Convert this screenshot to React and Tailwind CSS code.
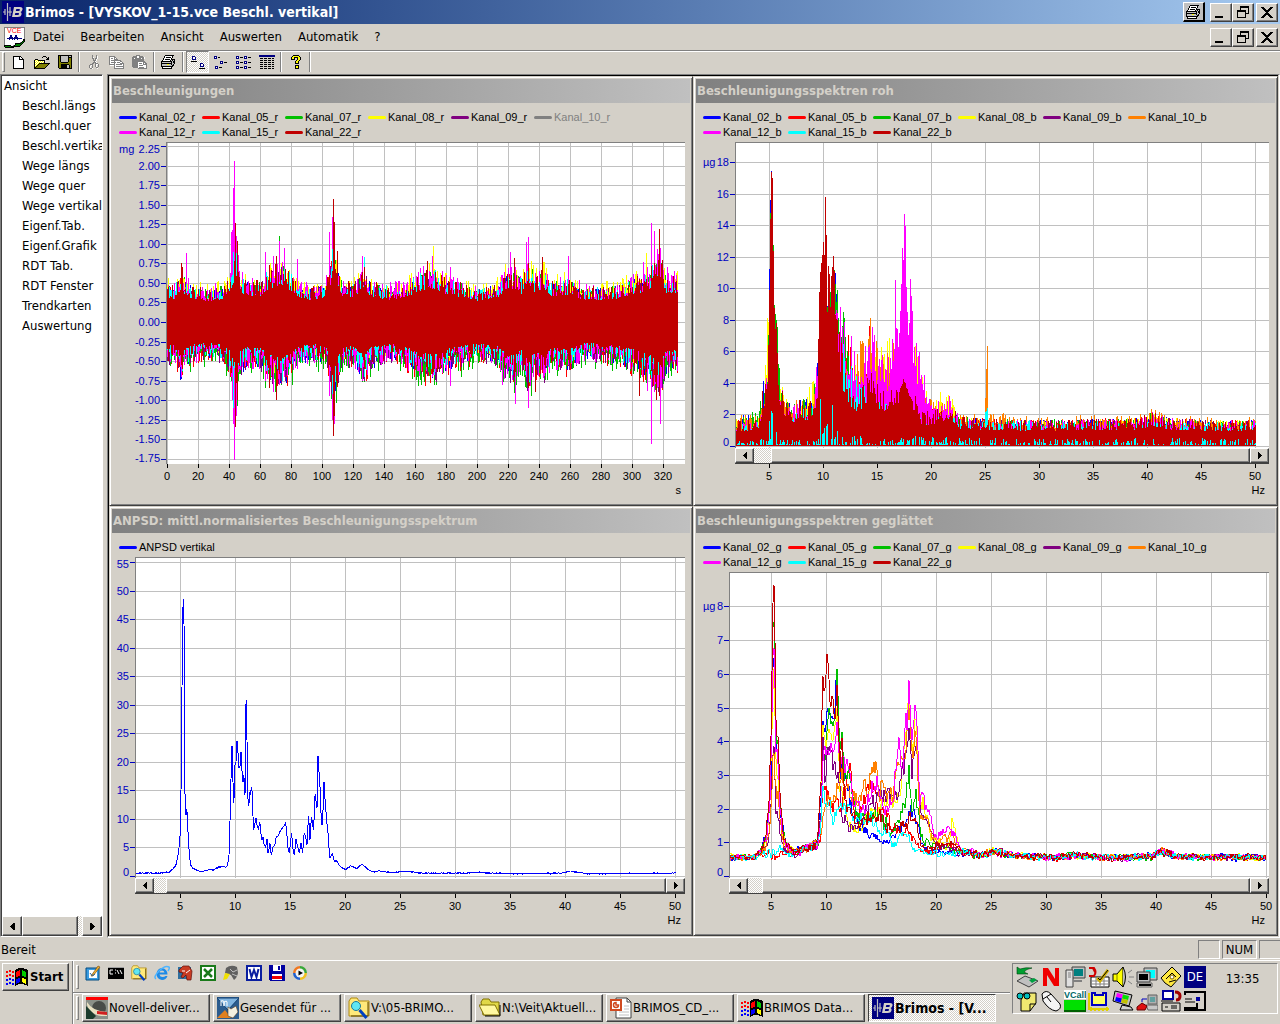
import React from 'react';
import clsx from 'clsx';

const COLORS = {
  '02': '#0000ff',
  '05': '#ff0000',
  '07': '#00c000',
  '08': '#ffff00',
  '09': '#800080',
  10: '#ff8000',
  12: '#ff00ff',
  15: '#00ffff',
  22: '#c00000',
};
const CHANNELS = ['02', '05', '07', '08', '09', '10', '12', '15', '22'];

const raised =
  'bg-[#d4d0c8] border border-t-white border-l-white border-r-[#404040] border-b-[#404040] shadow-[inset_-1px_-1px_0_#808080]';
const hatch =
  'bg-[conic-gradient(#fff_25%,#d4d0c8_0_50%,#fff_0_75%,#d4d0c8_0)] bg-[length:2px_2px]';

/* ---------- signal data ---------- */

const makeRandom = (seed) => {
  let s = seed;
  return () => {
    s = (s * 1664525 + 1013904223) % 4294967296;
    return s / 4294967296;
  };
};

// linear interpolation in a flat list x0, y0, x1, y1, ...
const interp = (pts, x) => {
  if (x <= pts[0]) return pts[1];
  for (let i = 2; i < pts.length; i += 2) {
    if (x <= pts[i]) {
      const t = (x - pts[i - 2]) / (pts[i] - pts[i - 2]);
      return pts[i - 1] + t * (pts[i + 1] - pts[i - 1]);
    }
  }
  return pts[pts.length - 1];
};

const TIME_ENVELOPE = [
  0, 0.4, 5, 0.37, 9, 0.55, 11, 0.46, 16, 0.38, 28, 0.34, 36, 0.38, 40, 0.46, 43, 0.66, 45, 0.75, 47, 0.48,
  52, 0.42, 60, 0.43, 64, 0.52, 70, 0.58, 74, 0.6, 79, 0.52, 84, 0.42, 92, 0.36, 102, 0.4, 105, 0.55,
  107, 0.9, 109, 0.65, 112, 0.43, 120, 0.4, 127, 0.56, 131, 0.42, 145, 0.36, 155, 0.42, 162, 0.5, 172, 0.55,
  180, 0.45, 200, 0.35, 213, 0.4, 219, 0.54, 224, 0.54, 229, 0.45, 233, 0.66, 237, 0.48, 243, 0.56, 248, 0.42,
  258, 0.45, 270, 0.35, 290, 0.38, 300, 0.45, 305, 0.48, 310, 0.52, 314, 0.6, 318, 0.66, 322, 0.48, 330, 0.46,
];

// [second, up, down] of the single strokes that stand out
const TIME_SPIKES = {
  12: [
    [12, 0.88, 0.5], [41, 1.15, 0.7], [41.8, 1.18, 1.0], [42.4, 1.72, 1.3], [43, 2.06, 1.76], [44.4, 1.1, 1.2],
    [63, 0.9, 0.75], [68.5, 0.85, 0.9], [72.3, 1.04, 0.8], [75.5, 0.95, 0.7], [84, 0.81, 0.6], [104.5, 1.15, 0.95],
    [106.3, 1.35, 1.25], [108, 0.9, 1.3], [126, 0.85, 0.75], [171, 0.85, 0.7], [183, 0.7, 0.82],
    [216.5, 0.6, 0.8], [221.5, 0.9, 0.6], [224.5, 0.7, 1.05], [232, 1.02, 0.7], [233.2, 1.09, 1.1],
    [259, 0.85, 0.55], [307, 0.77, 0.6], [310, 0.7, 0.88], [312.5, 1.27, 1.56], [314.5, 1.16, 0.9],
    [316.5, 0.94, 0.85], [318, 0.95, 1.3], [323, 0.7, 0.5], [327.5, 0.65, 0.5],
  ],
  22: [
    [9, 0.75, 0.55], [10, 0.7, 0.6], [44, 1.27, 1.35], [45, 1.04, 1.0], [66, 0.73, 0.85], [70.5, 0.85, 1.0],
    [107, 1.57, 1.46], [108, 1.28, 1.2], [110, 0.91, 0.8], [127, 0.7, 0.6], [168, 0.78, 0.6],
    [224.2, 0.82, 0.7], [233, 0.75, 0.85], [237.5, 0.5, 0.9], [242, 0.83, 0.6], [305, 0.55, 0.95],
    [316, 0.7, 1.0], [317.7, 1.19, 0.95], [319.5, 0.8, 0.7],
  ],
  '08': [[33, 0.53, 0.4], [172, 0.98, 0.6], [309.5, 0.88, 0.5], [194, 0.53, 0.4]],
  15: [[42.5, 0.9, 1.1], [127, 0.83, 0.7]],
  '07': [[72.2, 1.1, 0.8], [190, 0.5, 0.7], [243.5, 0.6, 0.75]],
};

const TIME_GAIN = {
  '02': [0.95, 1.12], '05': [0.9, 1.22], '07': [0.98, 1.32], '08': [1.12, 0.9],
  '09': [0.95, 1.14], 12: [1.1, 1.14], 15: [0.98, 1.0], 22: [1.0, 0.98],
};

const timePath = (ch) => {
  const rand = makeRandom(Number(ch) * 7919 + 11);
  const [gu, gd] = TIME_GAIN[ch];
  const up = [];
  const down = [];
  for (let px = 0; px < 511; px += 1) {
    const e = interp(TIME_ENVELOPE, px / 1.549);
    up.push(e * gu * (0.78 + 0.5 * rand() ** 2.4));
    down.push(e * gd * (0.78 + 0.5 * rand() ** 2.4));
  }
  (TIME_SPIKES[ch] || []).forEach(([s, u, d]) => {
    const i = Math.round(s * 1.549);
    up[i] = u;
    down[i] = d;
  });
  return up
    .map((u, i) => `M${i + 1.5} ${(180 - u * 78.1).toFixed(1)}V${(180 + down[i] * 78.1).toFixed(1)}`)
    .join('');
};

const RAW_TAIL = [22.5, 1.5, 25, 1.35, 30, 1.3, 39, 1.4, 40.5, 1.7, 42, 1.4, 46, 1.3, 50, 1.3];
const RAW = {
  22: [
    1, 1.25, 3, 1.3, 4, 1.6, 4.3, 2.7, 4.7, 4, 4.9, 6.6, 5.02, 12, 5.12, 16.8, 5.18, 17.8, 5.24, 17.6, 5.3, 14.5, 5.4, 9.6, 5.5, 7.3,
    5.65, 7.9, 5.75, 4.8, 6, 3.2, 6.5, 2.4, 7, 1.8, 7.7, 2.3, 8.5, 2.2, 9, 2.7, 9.4, 3.5, 9.6, 9.6, 9.75, 11.8,
    9.85, 11.3, 9.95, 13.5, 10.05, 11.4, 10.14, 15.7, 10.22, 15.6, 10.32, 7.8, 10.48, 12.9, 10.6, 8.2, 10.75, 11.4, 10.85, 11.2,
    10.95, 13, 11.05, 8.2, 11.3, 8, 11.5, 5.6, 11.8, 4.8, 12.2, 4, 12.6, 2.8, 13.4, 2.8, 14, 3.6, 14.2, 5, 14.5, 4,
    15, 3.2, 16, 2.9, 17, 3.4, 17.4, 4.2, 18, 3.1, 18.6, 2.4, 19.2, 1.6, 20.5, 2, 21, 2, 21.7, 2.4, ...RAW_TAIL,
  ],
  12: [
    1, 1.2, 4, 1.4, 4.6, 2.4, 5.2, 9, 5.5, 5, 6.5, 2, 9, 2.2, 9.6, 6, 11.2, 8.5, 11.4, 7.9, 11.8, 7, 12.2, 5.4, 12.5, 5.8, 13, 4.6,
    13.5, 4.9, 14.2, 6.4, 14.6, 6.3, 15, 4.9, 15.5, 5.8, 16, 4.4, 16.5, 6.8, 16.8, 10, 17, 7, 17.15, 9.3, 17.3, 12.6,
    17.4, 11.5, 17.47, 14.8, 17.55, 14.6, 17.65, 10.2, 17.8, 7.5, 17.9, 6.5, 18.02, 10.6, 18.2, 8.6, 18.4, 5.7, 18.8, 5.2, 19, 5.6,
    19.4, 3.6, 20, 3, 20.6, 2.4, 21.5, 2.7, 22.2, 2, ...RAW_TAIL,
  ],
  10: [
    1, 1.5, 4, 1.6, 4.6, 2.4, 5.2, 8, 6, 2.4, 9, 2.4, 10, 5, 12, 4.6, 12.6, 3.8, 13.1, 5, 13.8, 5.4, 14.2, 6.8, 14.6, 5.2, 15.1, 5.4,
    15.5, 4.2, 16.4, 5.2, 17, 6, 18, 6, 19, 3.8, 20, 2.4, 22, 1.9, 23, 1.7, 24.9, 1.6, 25.04, 5.9, 25.13, 6.7, 25.25, 1.8, 30, 1.5,
    39, 1.6, 40.5, 1.9, 42, 1.5, 50, 1.45,
  ],
  '07': [
    1, 1.3, 4, 1.8, 4.4, 3, 4.75, 4.8, 4.95, 8.2, 5.1, 16.8, 5.3, 15.5, 5.4, 9, 5.7, 7.6, 6, 3.3, 7, 2, 7.8, 2.7, 9, 2.5,
    9.6, 7, 10.4, 9, 11, 11.1, 11.2, 8.9, 11.38, 11.2, 11.5, 7, 11.85, 8, 12.1, 5, 13, 3.4, 17, 4, 19, 2, ...RAW_TAIL,
  ],
  '02': [1, 1.4, 4, 1.7, 4.85, 5, 5.1, 17.3, 5.2, 17.3, 5.3, 9, 6, 3, 7, 2, 9, 2.6, 9.4, 4.4, 10, 8, 11.1, 10.8, 11.4, 6, 12, 4, 13, 3, 19, 2, ...RAW_TAIL],
  '05': [1, 1.3, 9, 1.6, 10, 4, 12, 5.2, 12.2, 5.8, 13, 3.6, 14.2, 6.8, 14.5, 5, 16, 3.4, 18, 3, 19, 2, ...RAW_TAIL],
  '08': [1, 1.3, 4, 1.6, 4.5, 3, 5.2, 12, 5.6, 5, 7, 1.7, 9.4, 3.6, 10, 7, 11, 8, 12, 4, 14, 4, 16.4, 5.8, 18, 6, 20, 2.4, 21.4, 3.1, 22, 2.2, ...RAW_TAIL],
  '09': [1, 1.2, 4, 1.4, 4.6, 2, 5.2, 7, 6, 2, 9, 2, 10, 7, 12, 3.5, 15, 3.4, 17.5, 6, 19, 2.4, 20, 1.9, ...RAW_TAIL],
  15: [1, 1.1, 5.2, 1.6, 9, 2, 10, 3.4, 11.6, 4, 11.8, 5.4, 12, 3.8, 12.6, 4, 13.6, 3.1, 14, 2.8, 16, 2.2, 19, 1.6, 22, 1.4, 24.9, 1.3, 25.1, 3, 25.3, 1.3, 50, 1.15],
};

const rawPath = (ch) => {
  const rand = makeRandom(Number(ch) * 104729 + 3);
  let d = '';
  for (let px = 1; px < 521; px += 1) {
    const f = (px + 19.7) / 10.8;
    const peak = (f > 4.8 && f < 5.8) || (f > 9.5 && f < 11.3) || (f > 17 && f < 18.3);
    const v = interp(RAW[ch], f) * (peak ? 0.99 + rand() * 0.03 : 0.74 + rand() ** 1.8 * 0.55);
    d += `M${px + 0.5} ${(304 - v * 15.78).toFixed(1)}V304`;
  }
  return d;
};

// low strokes of the quietest sensor, seen along the foot of the plot
const footPath = () => {
  const rand = makeRandom(4242);
  const foot = [1, 0.3, 4.8, 0.4, 5.1, 2.6, 5.6, 1.6, 6, 0.4, 9.5, 0.4, 9.7, 3.2, 9.9, 1.2, 10.3, 1.8, 10.6, 1.3, 10.8, 2.8, 11.2, 1, 12, 0.6, 17.5, 0.6, 25, 0.45, 50, 0.45];
  let d = '';
  for (let px = 1; px < 521; px += 1) {
    const v = interp(foot, (px + 19.7) / 10.8) * rand() ** 1.5;
    if (rand() > 0.4) d += `M${px + 0.5} ${(303 - v * 15.78).toFixed(1)}V303`;
  }
  return d;
};

const ANPSD = [
  0.9, 0.5, 3, 0.5, 4, 0.7, 4.4, 1.4, 4.6, 2, 4.8, 4, 4.9, 5.5, 5, 8, 5.08, 20, 5.15, 36, 5.2, 46, 5.27, 48.8, 5.36, 40,
  5.4, 15, 5.48, 9.8, 5.53, 12, 5.6, 11, 5.7, 7, 5.8, 4, 5.9, 2, 6.1, 1.4, 6.5, 1, 7, 0.7, 7.5, 1.1, 8, 1.1, 8.5, 1.6,
  9.2, 1.6, 9.4, 3, 9.55, 13, 9.65, 22.5, 9.72, 23, 9.8, 13, 9.85, 12.5, 9.95, 19.5, 10.05, 20, 10.12, 24, 10.2, 22.5,
  10.3, 19, 10.4, 19, 10.5, 21.7, 10.6, 18, 10.7, 16, 10.75, 19, 10.8, 15, 10.88, 14, 10.95, 30, 11, 30.8, 11.05, 23,
  11.12, 14, 11.2, 11.7, 11.3, 15, 11.35, 14, 11.45, 15.7, 11.55, 14, 11.62, 8, 11.75, 9, 11.85, 10.3, 11.95, 9, 12.1, 8,
  12.2, 9.8, 12.3, 7.5, 12.4, 6.3, 12.5, 6.8, 12.6, 5.5, 12.75, 5, 12.85, 7, 12.95, 4, 13.15, 5.8, 13.25, 3.5, 13.4, 5,
  13.6, 5.5, 13.7, 6.8, 13.9, 7, 14.1, 8, 14.3, 8.5, 14.55, 9.2, 14.65, 8, 14.75, 5, 14.9, 4, 15.1, 7.7, 15.2, 5,
  15.35, 3.6, 15.5, 6.4, 15.8, 4, 15.95, 5.8, 16.1, 4, 16.25, 7.8, 16.35, 7, 16.5, 5.5, 16.65, 11, 16.75, 5.7, 16.9, 10.4,
  17.1, 8, 17.25, 15, 17.4, 11, 17.5, 21, 17.6, 18, 17.7, 15, 17.8, 9.5, 17.9, 8.6, 18.05, 16.7, 18.15, 13, 18.3, 9.5,
  18.45, 7, 18.55, 3, 18.8, 4, 19, 2.5, 19.2, 2.7, 19.5, 1.7, 20, 1.1, 20.5, 1.8, 21, 1.3, 21.5, 2.1, 22, 1.2, 22.5, 0.7,
  23, 0.9, 24, 0.6, 25.5, 0.8, 27, 0.5, 31, 0.5, 32.3, 0.7, 33, 0.5, 36, 0.4, 39.5, 0.5, 40.5, 0.8, 42, 0.4, 50, 0.5,
];

const anpsdPath = () => {
  const rand = makeRandom(99);
  let d = '';
  for (let px = 1; px < 541; px += 0.5) {
    const v = interp(ANPSD, (px - 45.5) / 11 + 5);
    d += `${px > 1 ? 'L' : 'M'}${px} ${(319 - v * 5.71 + (rand() - 0.5) * 0.8).toFixed(1)}`;
  }
  return d;
};

const rise = (peak, shoulder) => [
  1, 0.55, 3.4, 0.55, 4, 0.6 + peak * 0.02, 4.5, 0.6 + peak * 0.07, 4.8, 0.6 + peak * 0.2, 5, peak * 0.55, 5.1, peak * 0.9,
  5.18, peak, 5.26, peak, 5.34, peak * 0.75, 5.42, shoulder, 5.58, shoulder, 5.8, 0.6 + shoulder * 0.35, 6.2, 0.6 + shoulder * 0.12, 7, 0.68,
  8.4, 0.85, 9.2, 0.95,
];
const SMOOTH_TAIL = [22.2, 0.72, 24, 0.62, 25.3, 0.72, 27, 0.6, 31, 0.55, 32.3, 0.62, 36, 0.54, 39.5, 0.58, 40.5, 0.75, 42, 0.58, 50, 0.54];
const SMOOTH = {
  '02': [...rise(6.8, 3.7), 9.5, 2.2, 9.65, 4.5, 9.85, 4, 10.1, 4.9, 10.4, 4.9, 10.7, 4.5, 10.95, 6.2, 11.2, 3.6, 11.8, 2.7, 12.3, 2, 13, 1.5, 14, 1.3, 15, 1, 16, 1.1, 17, 1.5, 17.6, 1.9, 18.3, 1.6, 18.6, 0.9, 20, 0.7, ...SMOOTH_TAIL],
  '05': [...rise(0.65, 0.6), 9.4, 1, 9.7, 2.6, 10.4, 2.3, 11, 2, 11.7, 2.4, 12.2, 3, 12.6, 1.9, 13.4, 2.2, 14.2, 2.9, 14.8, 1.7, 15.2, 2.2, 16, 1.4, 17, 1.5, 18, 1.1, 18.6, 0.7, 20, 0.75, 21.5, 0.9, ...SMOOTH_TAIL],
  '07': [...rise(7.6, 4.1), 9.5, 2, 9.65, 4, 9.85, 3, 10.2, 5, 10.5, 4.6, 10.8, 4.6, 10.95, 6.1, 11.2, 3.8, 11.42, 4.3, 11.6, 3, 11.9, 3.2, 12.5, 2.1, 13, 1.6, 14, 1.9, 15, 1.7, 16, 1.3, 17, 1.9, 17.5, 2.9, 17.8, 1.8, 18.1, 2.5, 18.6, 1.2, 19.5, 0.9, ...SMOOTH_TAIL],
  '08': [...rise(6, 3), 9.5, 2, 9.7, 4.8, 9.9, 3.7, 10.2, 4.7, 10.6, 4, 10.95, 5.1, 11.2, 3, 11.5, 2.5, 12, 1.6, 13, 1.3, 14, 1.9, 15, 2, 15.5, 2.5, 16.5, 2.3, 17.2, 4, 17.5, 5.4, 17.85, 3.5, 18.1, 4.9, 18.5, 2.6, 19.5, 1.2, 21, 0.9, 21.5, 1.8, 22, 1, ...SMOOTH_TAIL],
  '09': [...rise(3.8, 1.8), 9.5, 2, 9.7, 4.3, 9.85, 3, 10.1, 3.8, 10.5, 3.2, 11, 3.3, 11.5, 1.8, 12, 1.5, 13, 1.6, 14, 2, 15, 2.5, 16, 2.2, 17, 3, 17.5, 4.4, 17.8, 3, 18.1, 4, 18.5, 2.1, 19.2, 1.4, 20, 0.9, ...SMOOTH_TAIL],
  10: [...rise(3.8, 2.4), 9.6, 1.4, 10.1, 2.6, 10.6, 2.2, 11, 2.9, 11.5, 3, 12, 2.4, 13, 2.2, 14, 2.9, 14.5, 3.3, 14.8, 2, 15, 2.9, 15.5, 2.4, 16, 2.3, 16.7, 3.5, 17.2, 3.6, 17.5, 4.9, 17.85, 3.5, 18.1, 4.6, 18.5, 2, 19.3, 1.5, 20, 1, 21.5, 1.2, ...SMOOTH_TAIL],
  12: [...rise(6.7, 3.3), 9.5, 1.6, 9.7, 3.4, 10.1, 3.6, 10.6, 3.4, 10.95, 4.6, 11.2, 3.1, 11.4, 3.6, 12, 2.9, 12.5, 2.2, 13.5, 2, 14.2, 2.7, 14.6, 3.1, 14.9, 2, 16, 2.2, 16.6, 4.2, 16.8, 3, 17, 3.5, 17.2, 5, 17.35, 4.3, 17.5, 6, 17.8, 3.8, 18.05, 5.3, 18.3, 3.9, 18.5, 2.3, 18.8, 2.2, 19.3, 1.8, 20, 1.2, 21.5, 1.4, ...SMOOTH_TAIL],
  15: [...rise(0.85, 0.7), 9.5, 1.5, 9.7, 2.9, 9.9, 2.1, 10.2, 2.4, 10.6, 1.6, 11, 2.1, 12, 2, 13, 1.6, 14, 1.7, 14.5, 1.6, 15, 1.1, 15.5, 1.4, 16, 0.9, 17, 1.3, 17.5, 1.1, 17.9, 0.7, 20, 0.65, ...SMOOTH_TAIL],
  22: [...rise(8.4, 4.1), 9.5, 2.6, 9.65, 6.2, 9.8, 5.2, 9.95, 6, 10.1, 6.7, 10.2, 5.9, 10.35, 4.8, 10.5, 5.2, 10.75, 4.7, 10.95, 5.8, 11.2, 3.2, 11.4, 4.1, 11.7, 2, 13, 1.5, 14.5, 2, 16, 1.3, 17.5, 1.7, 18.2, 1.5, 18.7, 0.8, 21.5, 1, ...SMOOTH_TAIL],
};

const smoothPath = (ch) => {
  const rand = makeRandom(Number(ch) * 5381 + 77);
  let d = '';
  let n = 0;
  for (let px = 1; px < 538; px += 1) {
    const f = (px - 42.5) / 11 + 5;
    n = n * 0.4 + (rand() - 0.5);
    const e = interp(SMOOTH[ch], f);
    const v = e * (1 + n * (e > 3.5 ? 0.08 : 0.24)) + (rand() - 0.5) * 0.1;
    d += `${px > 1 ? 'L' : 'M'}${px} ${(304 - v * 33.7).toFixed(1)}`;
  }
  return d;
};

/* ---------- chart parts ---------- */

const range = (from, to, step) => {
  const out = [];
  for (let v = from; v <= to + 1e-6; v += step) out.push(v);
  return out;
};

const Scrollbar = ({ gap }) => (
  <div className="flex h-[16px] border-b border-[#404040]">
    <button type="button" aria-label="Zurück" className={clsx(raised, 'w-[19px] flex items-center justify-center')}>
      <Arrow left />
    </button>
    <div className={clsx(hatch, gap)} />
    <div className={clsx(raised, 'flex-1')} />
    <button type="button" aria-label="Weiter" className={clsx(raised, 'w-[19px] flex items-center justify-center')}>
      <Arrow />
    </button>
  </div>
);

const Arrow = ({ left, big }) => (
  <svg viewBox="0 0 4 7" className={big ? 'w-[5px] h-[9px]' : 'w-[4px] h-[7px]'} shapeRendering="crispEdges">
    <path d={left ? 'M4 0V7L0 3.5Z' : 'M0 0V7L4 3.5Z'} />
  </svg>
);

const Panel = ({ title, legend, legendCols, axisWidth, right, w, h, xTicks, xPos, yTicks, yPos, yFormat, yUnit, xUnit, gap, children }) => {
  const firstY = Math.max(7, yPos(yTicks[yTicks.length - 1]));
  return (
    <section className="min-w-0 flex flex-col p-px border border-t-[#d4d0c8] border-l-[#d4d0c8] border-r-[#404040] border-b-[#404040] shadow-[inset_1px_1px_0_#fff,inset_-1px_-1px_0_#808080]">
      <div className="flex-1 min-h-0 flex flex-col p-px">
        <h2 className="h-6 leading-6 px-px bg-linear-to-r from-[#808080] to-[#c0c0c0] text-[#d4d0c8] font-bold text-[13px] whitespace-nowrap overflow-hidden">
          {title}
        </h2>
        <ul className={clsx("grid pt-[7px] pb-[2px] pl-[7px] font-['Liberation_Sans',sans-serif] text-[11px] leading-[15px]", legendCols)}>
          {legend.map(([label, color, off]) => (
            <li key={label} className={clsx('flex items-center gap-[2px] whitespace-nowrap', off && 'text-[#808080]')}>
              <svg className="w-[18px] h-[3px]" viewBox="0 0 18 3">
                <path d="M1.5 1.5H16.5" stroke={color} strokeWidth="3" strokeLinecap="round" />
              </svg>
              {label}
            </li>
          ))}
        </ul>
        <div className={clsx('flex-1 min-h-0 flex', right)}>
          <svg className={clsx("shrink-0 overflow-visible font-['Liberation_Sans',sans-serif] text-[11px]", axisWidth)} height={h} fill="#0000c0">
            {yTicks.map((v) => {
              const y = yPos(v);
              const ty = Math.min(h - 6, Math.max(7, y));
              return (
                <React.Fragment key={v}>
                  <text x="100%" y={ty} dx="-6" dy="4" textAnchor="end">{yFormat ? yFormat(v) : v}</text>
                  <svg x="100%" className="overflow-visible">
                    <path d={`M-5 ${Math.round(y) + 0.5}H0`} stroke="#0000c0" shapeRendering="crispEdges" />
                  </svg>
                </React.Fragment>
              );
            })}
            {yUnit && <text x="7" y={firstY + 4}>{yUnit}</text>}
          </svg>
          <div className="flex-1 min-w-0 flex flex-col">
            <svg viewBox={`0 0 ${w} ${h}`} preserveAspectRatio="none" className="flex-1 min-h-0 w-full bg-white" shapeRendering="crispEdges">
              <path
                d={yTicks.map((v) => `M0 ${Math.round(yPos(v)) + 0.5}H${w}`).join('') + xTicks.map((v) => `M${Math.round(xPos(v)) + 0.5} 0V${h}`).join('')}
                stroke="#c0c0c0"
              />
              {children}
              <path d={`M0.5 ${h}V0.5H${w}`} fill="none" stroke="#808080" />
            </svg>
            {gap && <Scrollbar gap={gap} />}
            <svg className="w-full h-[39px] overflow-visible shrink-0 font-['Liberation_Sans',sans-serif] text-[11px]">
              {xTicks.map((v) => (
                <svg key={v} x={`${(Math.round(xPos(v)) / w) * 100}%`} className="overflow-visible">
                  <path d="M0.5 0V4" stroke="#000" shapeRendering="crispEdges" />
                  <text x="0" y="16" textAnchor="middle">{v}</text>
                </svg>
              ))}
              <text x="100%" dx="-4" y="30" textAnchor="end">{xUnit}</text>
            </svg>
          </div>
        </div>
      </div>
    </section>
  );
};

const legendFor = (suffix, offChannel) =>
  CHANNELS.map((c) => [`Kanal_${c}_${suffix}`, c === offChannel ? '#808080' : COLORS[c], c === offChannel]);

const Strokes = ({ order, path }) =>
  order.map((c) => <path key={c} d={path(c)} stroke={COLORS[c]} fill="none" />);

/* ---------- icons ---------- */

const PALETTE = {
  k: '#000000', w: '#ffffff', y: '#ffff00', o: '#808000', g: '#808080', s: '#c0c0c0', b: '#000080',
};

const Pixels = ({ rows }) => {
  const w = Math.max(...rows.map((r) => r.length));
  return (
    <svg width={w} height={rows.length} viewBox={`0 0 ${w} ${rows.length}`} shapeRendering="crispEdges">
      {rows.map((row, y) =>
        [...row].map((ch, x) =>
          PALETTE[ch] ? <rect key={`${x}-${y}`} x={x} y={y} width="1" height="1" fill={PALETTE[ch]} /> : null
        )
      )}
    </svg>
  );
};

const ICONS = {
  new: [
    'kkkkkkkk...', 'kwwwwwkwk..', 'kwwwwwkwwk.', 'kwwwwwkkkkk', 'kwwwwwwwwwk', 'kwwwwwwwwwk', 'kwwwwwwwwwk',
    'kwwwwwwwwwk', 'kwwwwwwwwwk', 'kwwwwwwwwwk', 'kwwwwwwwwwk', 'kwwwwwwwwwk', 'kkkkkkkkkkk',
  ],
  open: [
    '.........kkk....', '........k...k.k.', '.............kk.', '.kkk........kkk.', 'kywykkkkkkk.....', 'kwywywywywk.....',
    'kywywywywyk.....', 'kwywykkkkkkkkkkk', 'kywykoooooooook.', 'kwykoooooooook..', 'kykoooooooook...', 'kkoooooooook....', 'kkkkkkkkkkk.....',
  ],
  save: [
    'kkkkkkkkkkkkkk', 'kokssssssskssk', 'kokssssssskkkk', 'kokssssssskook', 'kokssssssskook', 'kokssssssskook', 'kokssssssskook',
    'kookkkkkkkoook', 'kooooooooooook', 'kookkkkkkkkook', 'kookkkkkksskok', 'kookkkkkksskok', 'kookkkkkksskok', '.kkkkkkkkkkkkk',
  ],
  cut: [
    '...g...g..', '...g...gw.', '...gw..gw.', '...gg.ggw.', '....g.gw..', '....gggw..', '.....gw...', '....gggw..', '...gg.ggg.',
    '.ggg..gwwg', 'g.wg..gw.g', 'gw.g..gw.g', 'gw.g...gg.', '.ggw....w.',
  ],
  copy: [
    'gggggg.........', 'gwwwwgg........', 'gwggwgwg.......', 'gwwwwgggg......', 'gwgggggggggg...', 'gwwwwgwwwwwgg..',
    'gwgggggwgggwwg.', 'gwwwwgwwwwwgggg', 'ggggggwggggggwg', '.wwwwgwwwwwwwwg', '.....gwgggggggg', '.....gwwwwwwwwg', '.....gggggggggg',
  ],
  paste: [
    '....gggg.......', '.ggggwwgggg....', 'gggggwwgggggw..', 'ggwggggggwggw..', 'gggggggggggg...', 'gggggggggggg...',
    'ggggggggggggg..', 'ggggggwwwwwggg.', 'ggggggwgggwgwgg', 'ggggggwwwwwgggg', 'ggggggwggggwwwg', 'ggggggwwwwwwwwg', '.gggggwgggggwwg', '......ggggggggg',
  ],
  print: [
    '....kkkkkkkkk..', '...kwwwwwwwk...', '...kwkkkkkwk...', '..kwwwwwwwk....', '..kwkkkkkwkkkk.', '.kwwwwwwwk.ksk.',
    'kkkkkkkkkkkskk.', 'kssssssssskskk', 'kkkkkkkkkkkssk.', 'ksssssyyssksk..', 'ksssssssssskk..', 'kkkkkkkkkkkk...', '.kwwwwwwwwk....', '.kkkkkkkkkk....',
  ],
  large: [
    '.bbb..........', '.bwwb.........', '.bwwb.........', '.bbbb.........', '..............', 'kkkkkk........', '..............',
    '.........bbb..', '.........bwwb.', '.........bwwb.', '.........bbbb.', '..............', '........kkkkkk',
  ],
  small: [
    'bbb...........', 'bwb.kk........', 'bbb...........', '..............', '..............', '......bbb.....', '......bwb.kkk.',
    '......bbb.....', '..............', '..............', '.bbb..........', '.bwb.kkk......', '.bbb..........',
  ],
  list: [
    'bbb.....bbb....', 'bwb.kkk.bwb.kkk', 'bbb.....bbb....', '...............', '...............', 'bbb.....bbb....', 'bwb.kkk.bwb.kkk',
    'bbb.....bbb....', '...............', '...............', 'bbb.....bbb....', 'bwb.kkk.bwb.kkk', 'bbb.....bbb....',
  ],
  details: [
    'bbbbbbbbbbbbbbbb', 'bbbbbbbbbbbbbbbb', '................', '.kkk.kkk.kkk.kk.', '................', '.kkk.kkk.kkk.kk.', '................',
    '.kkk.kkk.kkk.kk.', '................', '.kkk.kkk.kkk.kk.', '................', '.kkk.kkk.kkk.kk.', '................', '.kkk.kkk.kkk.kk.',
  ],
  help: [
    '..kkkkkk..', '.kyyyyyyk.', 'kyykkkkyyk', 'kyyk..kyyk', 'kkkk..kyyk', '.....kyyk.', '....kyyk..', '....kyyk..', '....kkkk..',
    '..........', '....kkkk..', '....kyyk..', '....kyyk..', '....kkkk..',
  ],
};

const Flag = () => (
  <svg width="22" height="18" viewBox="0 0 22 18" shapeRendering="crispEdges">
    <path d="M0 3h2v2H0zM3 2h2v2H3zM6 3h2v2H6zM0 7h2v2H0zM3 6h2v2H3zM6 7h2v2H6z" fill="#f00" />
    <path d="M0 11h2v2H0zM3 10h2v2H3zM6 11h2v2H6zM0 15h2v2H0zM3 14h2v2H3zM6 15h2v2H6z" fill="#00f" />
    <path d="M9 2l4-2h4l5 2v16l-5-2h-4l-4 2z" fill="#000" />
    <path d="M10 4l4-2v6l-4 1z" fill="#f00" />
    <path d="M16 2l4 2v5l-4-1z" fill="#0c0" />
    <path d="M10 11l4-1v4l-4 2z" fill="#00f" />
    <path d="M16 10l4 1v5l-4-2z" fill="#ff0" />
  </svg>
);

const BrimosIcon = () => (
  <svg width="22" height="22" viewBox="0 0 22 22" className="shrink-0">
    <path d="M0 0h22v22H0z" fill="#000080" />
    <path d="M1 11h2V8M3 8v6M5.500 2v18M8 6v9M5.500 11H10" fill="none" stroke="#c0c0c0" strokeWidth="1.200" />
    <path d="M12 6h6q3 0 2.500 2.500-.5 2-2 2.500 1.500.5 1 2.500-.5 2.500-4 2.500h-5.500zM14.300 8l-.5 2h2.700q1.200 0 1.400-1t-.9-1zM13.300 12l-.5 2h2.700q1.400 0 1.600-1t-1-1z" fill="#d4d0c8" fillRule="evenodd" />
  </svg>
);

const VceIcon = () => (
  <svg width="22" height="22" viewBox="0 0 22 22" shapeRendering="crispEdges">
    <path d="M1 1h20v12q-1 5-7 4-2 5-13 3z" fill="#fff" stroke="#808080" />
    <path d="M21 13q-2 6-8 4l-2 4 6-1 4-4z" fill="#008000" stroke="#000" />
    <path d="M1 20q4-1 7 0l3 1H2z" fill="#008000" stroke="#000" />
    <text x="4" y="7" fontSize="7" fill="#f00" fontFamily="Liberation Sans">VCE</text>
    <path d="M4 12h15M6 14l2-5 2 5M11 14l2-5 2 5" fill="none" stroke="#000080" />
  </svg>
);

const Magnifier = ({ small }) => (
  <svg width={small ? 16 : 22} height={small ? 16 : 22} viewBox="0 0 22 22">
    <path d="M1 4l2-3h6l2 3h10v15H1z" fill="#ffe97a" stroke="#b08a10" />
    <path d="M20 5v14H3" fill="none" stroke="#5c4600" />
    <circle cx="8" cy="9" r="4.500" fill="#5fe6f2" stroke="#1a7a9a" />
    <path d="M11.500 13l7 8" stroke="#0040c0" strokeWidth="3" />
  </svg>
);

const QUICK = [
  ['Desktop', <svg key="i" viewBox="0 0 16 16"><path d="M1 3h13v12H1z" fill="#3a9be0" stroke="#004a80" /><path d="M4 5h8v8H4z" fill="#fff" /><path d="M6 11l7-10 2 1-7 9z" fill="#f0b030" stroke="#704000" strokeWidth=".6" /><path d="M5 8q2 4 5 1" stroke="#2060a0" fill="none" /></svg>],
  ['Eingabeaufforderung', <svg key="i" viewBox="0 0 16 16"><path d="M0 2h16v12H0z" fill="#000" /><path d="M0 2h16v1H0z" fill="#a0a0a0" /><path d="M5 5H2v4h3M7 5h1M7 8h1M9 5l2 4M12 5l2 4" fill="none" stroke="#fff" /></svg>],
  ['Suchen', <Magnifier key="i" small />],
  ['Internet Explorer', <svg key="i" viewBox="0 0 16 16"><path d="M13.500 9.500H5.500Q6 12 8.500 12q2 0 3-1h2Q12 15 8 15q-5.500-1-5.500-6Q3 3.500 8 3q5.500 1 5.500 6.500M5.500 7.500h5Q10 5.500 8 5.500t-2.500 2" fill="#1e8ae6" fillRule="evenodd" /><path d="M2 14Q-1 12 5 6t10-4q1 1-1 4" fill="none" stroke="#4db4ff" strokeWidth="1.500" /></svg>],
  ['Browser', <svg key="i" viewBox="0 0 16 16"><path d="M1 2h13v12H1z" fill="#2f6f9f" /><path d="M2 5l4-4 6 0 3 5-1 9h-4l-1-5-3 3-2-1 2-4-4-1z" fill="#c83c24" stroke="#60100a" strokeWidth=".7" /><path d="M5 6h3M9 8l4-3" stroke="#fff" /></svg>],
  ['Excel', <svg key="i" viewBox="0 0 16 16"><path d="M1 1h14v14H1z" fill="#fff" stroke="#1a7a1a" strokeWidth="2" /><path d="M4 4l8 8M12 4l-8 8" stroke="#1a7a1a" strokeWidth="2.500" /></svg>],
  ['Adler', <svg key="i" viewBox="0 0 16 16"><path d="M3 3q5-4 11-1l1 6q-1 5-4 7L8 10 2 8z" fill="#606060" /><path d="M7 4l3 3 4-2M9 9l5 2" stroke="#c0c0c0" fill="none" /><path d="M0 15l2-7 5 1-3 5z" fill="#f0e000" /></svg>],
  ['Word', <svg key="i" viewBox="0 0 16 16"><path d="M1 1h14v14H1z" fill="#fff" stroke="#0a1ea0" strokeWidth="2" /><path d="M3.500 4l2 8 2.500-7 2.500 7 2-8" fill="none" stroke="#0a1ea0" strokeWidth="2" /></svg>],
  ['Diskette', <svg key="i" viewBox="0 0 16 16" shapeRendering="crispEdges"><path d="M0 0h16v16H1l-1-1z" fill="#0000a0" /><path d="M4 0h8v6H4z" fill="#fff" /><path d="M9 1h2v4H9z" fill="#0000a0" /><path d="M3 9h10v6H3z" fill="#fff" /><path d="M3 11h10v3H3z" fill="#f00000" /></svg>],
  ['Media Player', <svg key="i" viewBox="0 0 16 16"><path d="M8 1A7 7 0 0 0 1 8H8z" fill="#f07820" /><path d="M8 1A7 7 0 0 1 15 8H8z" fill="#38a838" /><path d="M1 8A7 7 0 0 0 8 15V8z" fill="#2060d0" /><path d="M15 8A7 7 0 0 1 8 15V8z" fill="#f0c020" /><circle cx="8" cy="8" r="4.500" fill="#f4f4f4" /><path d="M6.500 5.500v5L11 8z" fill="#000" /></svg>],
];

const TASKS = [
  ['Novell-deliver...', <svg key="i" viewBox="0 0 22 22"><path d="M0 0h22v22H0z" fill="#202820" /><path d="M0 3h22v19H0z" fill="#8a9088" /><circle cx="13" cy="11" r="7" fill="#484c48" /><path d="M0 0h22v3H0z" fill="#f00" /><path d="M1 5q5 9 20 10v4Q5 20 1 8z" fill="#e8e0c0" /><path d="M11 14l10 1v3l-10-1z" fill="#d02020" /><path d="M0 9l10 10-3 3H0z" fill="#1c3c2c" /></svg>],
  ['Gesendet für ...', <svg key="i" viewBox="0 0 22 22"><path d="M0 0h22v22H0z" fill="#2c5c8e" /><path d="M0 1h22L11 13z" fill="#80b4e0" stroke="#144070" /><path d="M4 9V4q3-1 3 1v4-4q3-2 3 0v4" fill="none" stroke="#fff" /><path d="M0 21h14l-6-8z" fill="#e08020" /><path d="M11 10l3 2 5-3 2 6-5 6-5-2z" fill="#f4f0e0" stroke="#604020" strokeWidth=".6" /></svg>],
  ['V:\\05-BRIMO...', <Magnifier key="i" />],
  ['N:\\Veit\\Aktuell...', <svg key="i" viewBox="0 0 22 22"><path d="M2 5l2-3h6l2 3h8v13H4z" fill="#e0d848" stroke="#807000" /><path d="M0 8h16l5 10H5z" fill="#fff8a0" stroke="#807000" /><path d="M6 19h15V8" fill="none" stroke="#000" /></svg>],
  ['BRIMOS_CD_...', <svg key="i" viewBox="0 0 22 22"><path d="M6 1h11l4 4v16H6z" fill="#fff" stroke="#404040" /><path d="M17 1v4h4" fill="none" stroke="#404040" /><path d="M14 9h5M14 12h5M9 15h10M9 18h10" stroke="#c0c0c0" /><path d="M1 3h10v10H1z" fill="#fff" stroke="#d04a20" strokeWidth="2" /><path d="M8.500 8a2.500 2.500 0 1 1-2.500-2.500V8z" fill="none" stroke="#d04a20" strokeWidth="1.500" /></svg>],
  ['BRIMOS Data...', <Flag key="i" />],
  ['Brimos - [V...', <BrimosIcon key="i" />],
];

const TRAY = [
  <><path d="M1 15l8-5 13 5-9 6z" fill="#c0c0c0" stroke="#404040" /><path d="M13 14l5-2 3 2-5 3z" fill="#00a040" /><path d="M1 1l3 2q6-2 12-1-6 1-8 4l4 2H1z" fill="#00a030" stroke="#004010" strokeWidth=".6" /></>,
  <path d="M3 20V2h5l7 11V2h4v18h-5L7 9v11z" fill="#f00000" />,
  <><path d="M8 1h13v11H8z" fill="#c0c0c0" stroke="#404040" /><path d="M10 3h9v7h-9z" fill="#008080" /><path d="M2 4h7v17H2z" fill="#e0e0e0" stroke="#404040" /><path d="M4 7h3M4 9h3M4 11h3" stroke="#808080" /><path d="M9 14h9v2H9z" fill="#808080" /></>,
  <><path d="M3 11h18v10H3z" fill="#fff" stroke="#000" /><path d="M3 15h18M3 18h18M8 11v10M12 11v10M16 11v10" stroke="#808080" /><path d="M1 2h5q3 4 0 8H1M5 2l2 4" stroke="#d00000" fill="none" strokeWidth="2" /><path d="M9 12l3 3 8-11" stroke="#d0b000" fill="none" strokeWidth="3" /><path d="M10 12l2 2 8-10" stroke="#000" fill="none" /></>,
  <><path d="M1 8h4l6-7v20l-6-6H1z" fill="#ffff00" stroke="#000" /><path d="M5 8v7" stroke="#808000" /><path d="M11 1q5 10 0 20" fill="#c0c0c0" stroke="#000" /><path d="M16 7l4-3M17 11h5M16 15l4 3" stroke="#808080" /></>,
  <><path d="M8 2h13v12H8z" fill="#c0c0c0" stroke="#404040" /><path d="M10 4h9v8h-9z" fill="#00ffff" /><path d="M1 6h13v10H1z" fill="#c0c0c0" stroke="#404040" /><path d="M3 8h9v6H3zM3 18h12v2H3z" fill="#000" /><path d="M1 17h15v4H1z" fill="none" stroke="#606060" /></>,
  <><path d="M1 12L12 1l9 9-10 11-6-4z" fill="#ffe840" stroke="#000" /><path d="M6 13l6-6 4 4M9 16l7-2" fill="none" stroke="#000" /><circle cx="12" cy="11" r="2" fill="#fff" stroke="#806000" /></>,
  null,
  <><path d="M8 3h12v10l-6 8H5V10z" fill="#f0e870" stroke="#000" /><path d="M14 21v-7h6" fill="none" stroke="#000" /><circle cx="4" cy="6" r="3" fill="#00c0c0" stroke="#000" /><circle cx="11" cy="6" r="3" fill="#00c0c0" stroke="#000" /></>,
  <><path d="M2 4q4-5 9 0l9 10q2 5-4 7-7-1-13-10z" fill="#f4f4f4" stroke="#000" /><path d="M3 9l8-5M7 7l4 5" stroke="#000" /></>,
  <><path d="M0 0h22v9H0z" fill="#fff" /><text x="0" y="8" fontSize="9" fontWeight="bold" fill="#006868" fontFamily="Liberation Sans Narrow, Liberation Sans">VCall</text><path d="M0 10h22v12H0z" fill="#00e000" /><path d="M0 21h22V10" stroke="#006000" strokeWidth="2" fill="none" /></>,
  <><path d="M1 3v16h20M3 17v4M7 18v3M11 18v3M15 18v3M19 17v4" stroke="#e0d000" strokeWidth="2" fill="none" /><path d="M4 3h3v2h8V3h3v12H4z" fill="#ffff60" stroke="#0000c0" strokeWidth="2" /></>,
  <><path d="M3 1l17 4-3 11L1 11z" fill="#c0c0c0" stroke="#000" /><path d="M5 3l6 1.500-1 4-6-1.500z" fill="#ff00ff" /><path d="M11 4.500l6 1.500-1 4-6-1.500z" fill="#00e000" /><path d="M4 7l6 1.500-1 4L3 11z" fill="#0000ff" /><path d="M10 8.500l6 1.500-1 4-6-1.500z" fill="#c0c000" /><path d="M10 15l9 2 2 3H8z" fill="#d0d0d0" stroke="#000" /></>,
  <><path d="M12 5h9v9h-9z" fill="#b0b0b0" stroke="#606060" /><path d="M14 7h5v5h-5z" fill="#60a0a0" /><path d="M10 15h12v5H12z" fill="#c8c8c8" stroke="#606060" /><path d="M1 17l5-4 5 3-2 4H1z" fill="#e01010" stroke="#600" /><path d="M6 12V9h5" stroke="#0000c0" fill="none" /></>,
  <><path d="M3 1h10v8H3z" fill="#fff" stroke="#0000a0" strokeWidth="2" /><path d="M15 2q5 0 5 4t-4 4" fill="none" stroke="#a00000" strokeWidth="3" /><path d="M2 13h18v8H2z" fill="#d4d0c8" stroke="#000" /><path d="M1 11h12M5 17h3M11 16h6M11 18h6" stroke="#000" /></>,
  <><path d="M1 5V2h20v18H1v-2h12v-5" fill="none" stroke="#000" strokeWidth="2" /><path d="M12 7h4v4h-4z" fill="#0000a0" /><path d="M1 9h7M1 12h10" stroke="#000" /></>,
];

/* ---------- window parts ---------- */

const CaptionButtons = () => (
  <div className="flex h-[19px]">
    <button type="button" aria-label="Minimieren" className={clsx(raised, 'w-[22px] flex items-end justify-center pb-[3px]')}>
      <span className="block w-[8px] h-[2px] mr-[4px] bg-black" />
    </button>
    <button type="button" aria-label="Wiederherstellen" className={clsx(raised, 'w-[22px] mr-[2px] flex items-center justify-center')}>
      <svg width="12" height="12" viewBox="0 0 12 12" shapeRendering="crispEdges">
        <path d="M3.500 4V1H11.500V7.500H9M3 1H12M.5 5H8.500V11.500H.5ZM0 5H9" fill="none" stroke="#000" />
        <path d="M3 0h9v2H3zM0 4h9v2H0z" />
      </svg>
    </button>
    <button type="button" aria-label="Schließen" className={clsx(raised, 'w-[22px] flex items-center justify-center')}>
      <svg width="12" height="11" viewBox="0 0 12 11" shapeRendering="crispEdges">
        <path d="M1 0l10 11M11 0L1 11" stroke="#000" strokeWidth="2" />
      </svg>
    </button>
  </div>
);

const ToolButton = ({ icon, label, pressed }) => (
  <button
    type="button"
    aria-label={label}
    className={clsx(
      'w-[23px] h-[22px] flex items-center justify-center',
      pressed && [hatch, 'border border-t-[#808080] border-l-[#808080] border-r-white border-b-white']
    )}
  >
    <Pixels rows={ICONS[icon]} />
  </button>
);

const Separator = () => <div className="w-[2px] h-[20px] mx-[2px] border-l border-l-[#808080] border-r border-r-white" />;
const Grip = ({ tall }) => (
  <div className={clsx('w-[3px] border border-t-white border-l-white border-r-[#808080] border-b-[#808080]', tall ? 'h-[24px]' : 'h-[20px]')} />
);

const TREE = [
  'Beschl.längs', 'Beschl.quer', 'Beschl.vertikal', 'Wege längs', 'Wege quer', 'Wege vertikal', 'Eigenf.Tab.',
  'Eigenf.Grafik', 'RDT Tab.', 'RDT Fenster', 'Trendkarten', 'Auswertung',
];

const App = () => (
  <div className="h-screen min-h-[600px] flex flex-col overflow-hidden bg-[#d4d0c8] text-black text-[13px] leading-5 font-['DejaVu_Sans_Condensed','DejaVu_Sans',sans-serif]">
    <header className="h-6 shrink-0 flex items-center gap-px px-[2px] bg-linear-to-r from-[#0a246a] to-[#a6caf0]">
      <BrimosIcon />
      <h1 className="flex-1 text-white font-bold text-[14px] whitespace-nowrap">Brimos - [VYSKOV_1-15.vce Beschl. vertikal]</h1>
      <button type="button" aria-label="Drucken" className="w-[22px] h-[20px] mr-[4px] flex items-center justify-center bg-[#c0c0c0] border border-t-white border-l-white border-r-2 border-b-2 border-r-black border-b-black">
        <Pixels rows={ICONS.print} />
      </button>
      <CaptionButtons />
    </header>

    <nav className="h-[27px] shrink-0 flex items-center pl-[3px] pr-[2px] border-b border-[#808080]">
      <VceIcon />
      <div className="flex-1 flex">
        {['Datei', 'Bearbeiten', 'Ansicht', 'Auswerten', 'Automatik', '?'].map((m) => (
          <button key={m} type="button" className="px-2">{m}</button>
        ))}
      </div>
      <CaptionButtons />
    </nav>

    <div className="h-[23px] shrink-0 flex items-center pl-[2px] pb-[2px] border-t border-white">
      <Grip />
      <div className="flex items-center pl-[2px]">
        <ToolButton icon="new" label="Neu" />
        <ToolButton icon="open" label="Öffnen" />
        <ToolButton icon="save" label="Speichern" />
        <Separator />
        <ToolButton icon="cut" label="Ausschneiden" />
        <ToolButton icon="copy" label="Kopieren" />
        <ToolButton icon="paste" label="Einfügen" />
        <Separator />
        <ToolButton icon="print" label="Drucken" />
        <Separator />
        <ToolButton icon="large" label="Große Symbole" pressed />
        <ToolButton icon="small" label="Kleine Symbole" />
        <ToolButton icon="list" label="Liste" />
        <ToolButton icon="details" label="Details" />
        <Separator />
        <ToolButton icon="help" label="Hilfe" />
        <Separator />
      </div>
    </div>

    <main className="flex-1 min-h-0 flex gap-[4px]">
      <aside className="w-[103px] shrink-0 mb-px flex flex-col bg-white border border-t-[#808080] border-l-[#808080] border-r-white border-b-white shadow-[inset_1px_1px_0_#404040]">
        <div className="flex-1 min-h-0 overflow-hidden whitespace-nowrap pt-px pl-[3px]">
          <button type="button" className="block">Ansicht</button>
          <ul className="pl-[18px]">
            {TREE.map((t) => (
              <li key={t}><button type="button" className="block">{t}</button></li>
            ))}
          </ul>
        </div>
        <div className="flex h-[20px] ml-px">
          <button type="button" aria-label="Links" className={clsx(raised, 'w-[20px] flex items-center justify-center')}><Arrow left big /></button>
          <div className={clsx(raised, 'w-[56px]')} />
          <div className={clsx(hatch, 'flex-1')} />
          <button type="button" aria-label="Rechts" className={clsx(raised, 'w-[20px] flex items-center justify-center')}><Arrow big /></button>
        </div>
      </aside>

      <div className="flex-1 min-w-0 flex border border-t-[#808080] border-l-[#808080] border-r-white border-b-white">
        <div className="flex-1 min-w-0 grid grid-cols-[584fr_585fr] grid-rows-2 border-t border-l border-black mr-px mb-px">
          <Panel
            title="Beschleunigungen"
            legend={legendFor('r', '10')}
            legendCols="grid-cols-[repeat(6,83px)]"
            axisWidth="w-[54px]"
            right="pr-[5px]"
            w={519}
            h={322}
            xTicks={range(0, 320, 20)}
            xPos={(v) => 1 + v * 1.549}
            yTicks={range(-1.75, 2.25, 0.25)}
            yPos={(v) => 180 - v * 78.1}
            yFormat={(v) => v.toFixed(2)}
            yUnit="mg"
            xUnit="s"
          >
            <Strokes order={['02', '05', '07', '08', '09', '12', '15', '22']} path={timePath} />
          </Panel>
          <Panel
            title="Beschleunigungsspektren roh"
            legend={legendFor('b')}
            legendCols="grid-cols-[repeat(6,85px)]"
            axisWidth="w-[39px]"
            right="pr-[6px]"
            w={534}
            h={306}
            xTicks={range(5, 50, 5)}
            xPos={(v) => 34 + (v - 5) * 10.8}
            yTicks={range(0, 18, 2)}
            yPos={(v) => 304 - v * 15.78}
            yUnit="µg"
            xUnit="Hz"
            gap="w-[17px]"
          >
            <Strokes order={['02', '08', '05', '09', '07', '10', '12', '15', '22']} path={rawPath} />
            <path d={footPath()} stroke="#00ffff" />
          </Panel>
          <Panel
            title="ANPSD: mittl.normalisiertes Beschleunigungsspektrum"
            legend={[['ANPSD vertikal', '#0000ff']]}
            legendCols="grid-cols-1"
            axisWidth="w-[23px]"
            right="pr-[5px]"
            w={550}
            h={321}
            xTicks={range(5, 50, 5)}
            xPos={(v) => 45 + (v - 5) * 11}
            yTicks={range(0, 55, 5)}
            yPos={(v) => 319 - v * 5.71}
            xUnit="Hz"
            gap="w-[12px]"
          >
            <path d={anpsdPath()} stroke="#0000ff" fill="none" />
          </Panel>
          <Panel
            title="Beschleunigungsspektren geglättet"
            legend={legendFor('g')}
            legendCols="grid-cols-[repeat(6,85px)]"
            axisWidth="w-[33px]"
            right="pr-[6px]"
            w={540}
            h={306}
            xTicks={range(5, 50, 5)}
            xPos={(v) => 42 + (v - 5) * 11}
            yTicks={range(0, 8, 1)}
            yPos={(v) => 304 - v * 33.7}
            yUnit="µg"
            xUnit="Hz"
            gap="w-[14px]"
          >
            <Strokes order={CHANNELS} path={smoothPath} />
          </Panel>
        </div>
      </div>
    </main>

    <footer className="h-[22px] shrink-0 flex items-center gap-[2px] pl-px">
      <span className="flex-1 pt-px">Bereit</span>
      <span className="w-[22px] h-[19px] border border-t-[#808080] border-l-[#808080] border-r-white border-b-white" />
      <span className="w-[35px] h-[19px] leading-[18px] text-center border border-t-[#808080] border-l-[#808080] border-r-white border-b-white">NUM</span>
      <span className="w-[21px] h-[19px] border-t border-l border-b border-t-[#808080] border-l-[#808080] border-b-white" />
    </footer>

    <div className="h-16 shrink-0 flex border-t border-white pl-[2px]">
      <button type="button" className={clsx(raised, 'mt-[2px] w-[67px] h-[28px] flex items-center gap-[2px] pl-[3px] font-bold')}>
        <Flag />
        Start
      </button>
      <div className="ml-[3px] flex-1 min-w-0 flex flex-col border-l border-[#808080] shadow-[inset_1px_0_0_#fff]">
        <div className="h-[32px] shrink-0 flex items-start pt-[4px] pl-[3px] border-b border-[#808080]">
          <Grip tall />
          <div className="flex gap-[7px] pl-[6px]">
            {QUICK.map(([label, icon]) => (
              <button key={label} type="button" aria-label={label} className="w-[16px] h-[16px]">{icon}</button>
            ))}
          </div>
        </div>
        <div className="flex-1 flex items-start pl-[3px] gap-[3px] border-t border-white">
          <div className="pt-[2px]"><Grip tall /></div>
          {TASKS.map(([label, icon], i) => {
            const active = i === TASKS.length - 1;
            return (
              <button
                key={label}
                type="button"
                className={clsx(
                  'w-[128px] h-[28px] flex items-center gap-px pl-[3px] whitespace-nowrap overflow-hidden',
                  active
                    ? [hatch, 'font-bold text-[14px] border border-t-[#404040] border-l-[#404040] border-r-white border-b-white']
                    : raised
                )}
              >
                <span className="w-[22px] h-[22px] shrink-0 flex items-center">{icon}</span>
                {label}
              </button>
            );
          })}
        </div>
      </div>
      <div className="w-[266px] h-[51px] shrink-0 mt-[2px] mr-[2px] ml-[2px] flex items-start border border-t-[#808080] border-l-[#808080] border-r-white border-b-white">
        <div className="grid grid-cols-[repeat(8,24px)] auto-rows-[24px] pl-[3px] pt-[2px]">
          {TRAY.map((icon, i) =>
            icon ? (
              <svg key={i} width="22" height="22" viewBox="0 0 22 22">{icon}</svg>
            ) : (
              <button key={i} type="button" className="w-[22px] h-[22px] bg-[#000080] text-white">DE</button>
            )
          )}
        </div>
        <time className="flex-1 text-center pt-[5px]">13:35</time>
      </div>
    </div>
  </div>
);

export default App;
